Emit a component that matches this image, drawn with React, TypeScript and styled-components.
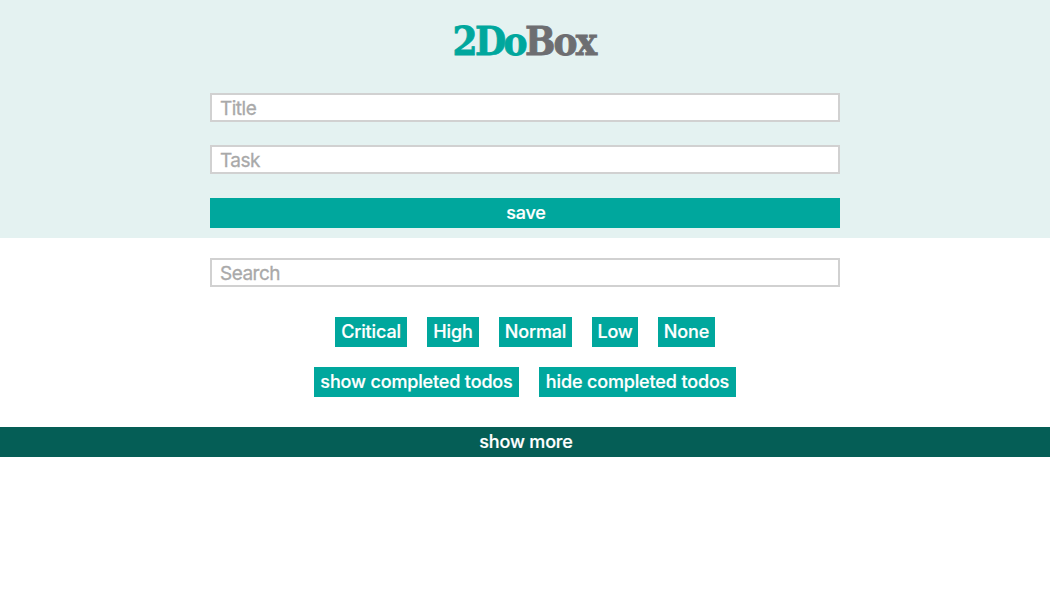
import React from 'react';
import styled, { createGlobalStyle } from 'styled-components';

const GlobalStyle = createGlobalStyle`
  * { box-sizing: border-box; }
  body { margin: 0; background: #fff; font-family: Inter, "Liberation Sans", sans-serif; }
`;

const Header = styled.header`
  display: flex;
  flex-direction: column;
  align-items: center;
  height: 238px;
  background: #e4f2f1;
`;

const Logo = styled.h1`
  margin: 17px 0 28px;
  padding-right: 2px;
  height: 48px;
  line-height: 48px;
  font-family: "DejaVu Serif Condensed", "DejaVu Serif", serif;
  font-stretch: condensed;
  font-size: 40px;
  font-weight: 700;
  letter-spacing: -1.8px;
  color: #6d6e71;
  -webkit-text-stroke: 0.8px currentColor;
`;

const LogoAccent = styled.span`
  color: #00a79d;
  letter-spacing: -2.6px;
`;

const Field = styled.input`
  display: block;
  width: 630px;
  height: 29px;
  margin: 0 0 23px;
  padding: 1px 8px 0;
  border: 2px solid #d1d1d1;
  border-radius: 0;
  background: #fff;
  font: 400 19px Inter, sans-serif;
  letter-spacing: -0.5px;
  &::placeholder { color: #a9a9a9; opacity: 1; -webkit-text-stroke: 0.3px #a9a9a9; }
`;

const Button = styled.button<{ $width?: string; $dark?: boolean; $wide?: boolean }>`
  width: ${(p) => p.$width ?? 'auto'};
  height: 30px;
  padding: 0 0 0 ${(p) => (p.$wide ? '2px' : '0')};
  border: 0;
  background: ${(p) => (p.$dark ? '#055e56' : '#00a79d')};
  color: #fff;
  font: 500 18px/30px Inter, sans-serif;
  letter-spacing: -0.15px;
  -webkit-text-stroke: 0.2px currentColor;
  white-space: nowrap;
`;

const SaveButton = styled(Button)`
  margin-top: 1px;
`;

const Main = styled.main`
  display: flex;
  flex-direction: column;
  align-items: center;
  padding-top: 20px;
`;

const Row = styled.div<{ $top: number }>`
  display: flex;
  gap: 20px;
  margin-top: ${(p) => p.$top}px;
`;

const Footer = styled.footer`
  margin-top: 30px;
`;

const priorities = [
  ['Critical', '72px'],
  ['High', '52px'],
  ['Normal', '73px'],
  ['Low', '46px'],
  ['None', '57px'],
];

export default function App() {
  return (
    <>
      <GlobalStyle />
      <Header>
        <Logo><LogoAccent>2Do</LogoAccent>Box</Logo>
        <Field placeholder="Title" />
        <Field placeholder="Task" />
        <SaveButton $width="630px" $wide>save</SaveButton>
      </Header>
      <Main>
        <Field placeholder="Search" />
        <Row $top={7}>
          {priorities.map(([label, width]) => (
            <Button key={label} $width={width}>{label}</Button>
          ))}
        </Row>
        <Row $top={20}>
          <Button $width="205px">show completed todos</Button>
          <Button $width="197px">hide completed todos</Button>
        </Row>
      </Main>
      <Footer>
        <Button $width="100%" $dark $wide>show more</Button>
      </Footer>
    </>
  );
}
